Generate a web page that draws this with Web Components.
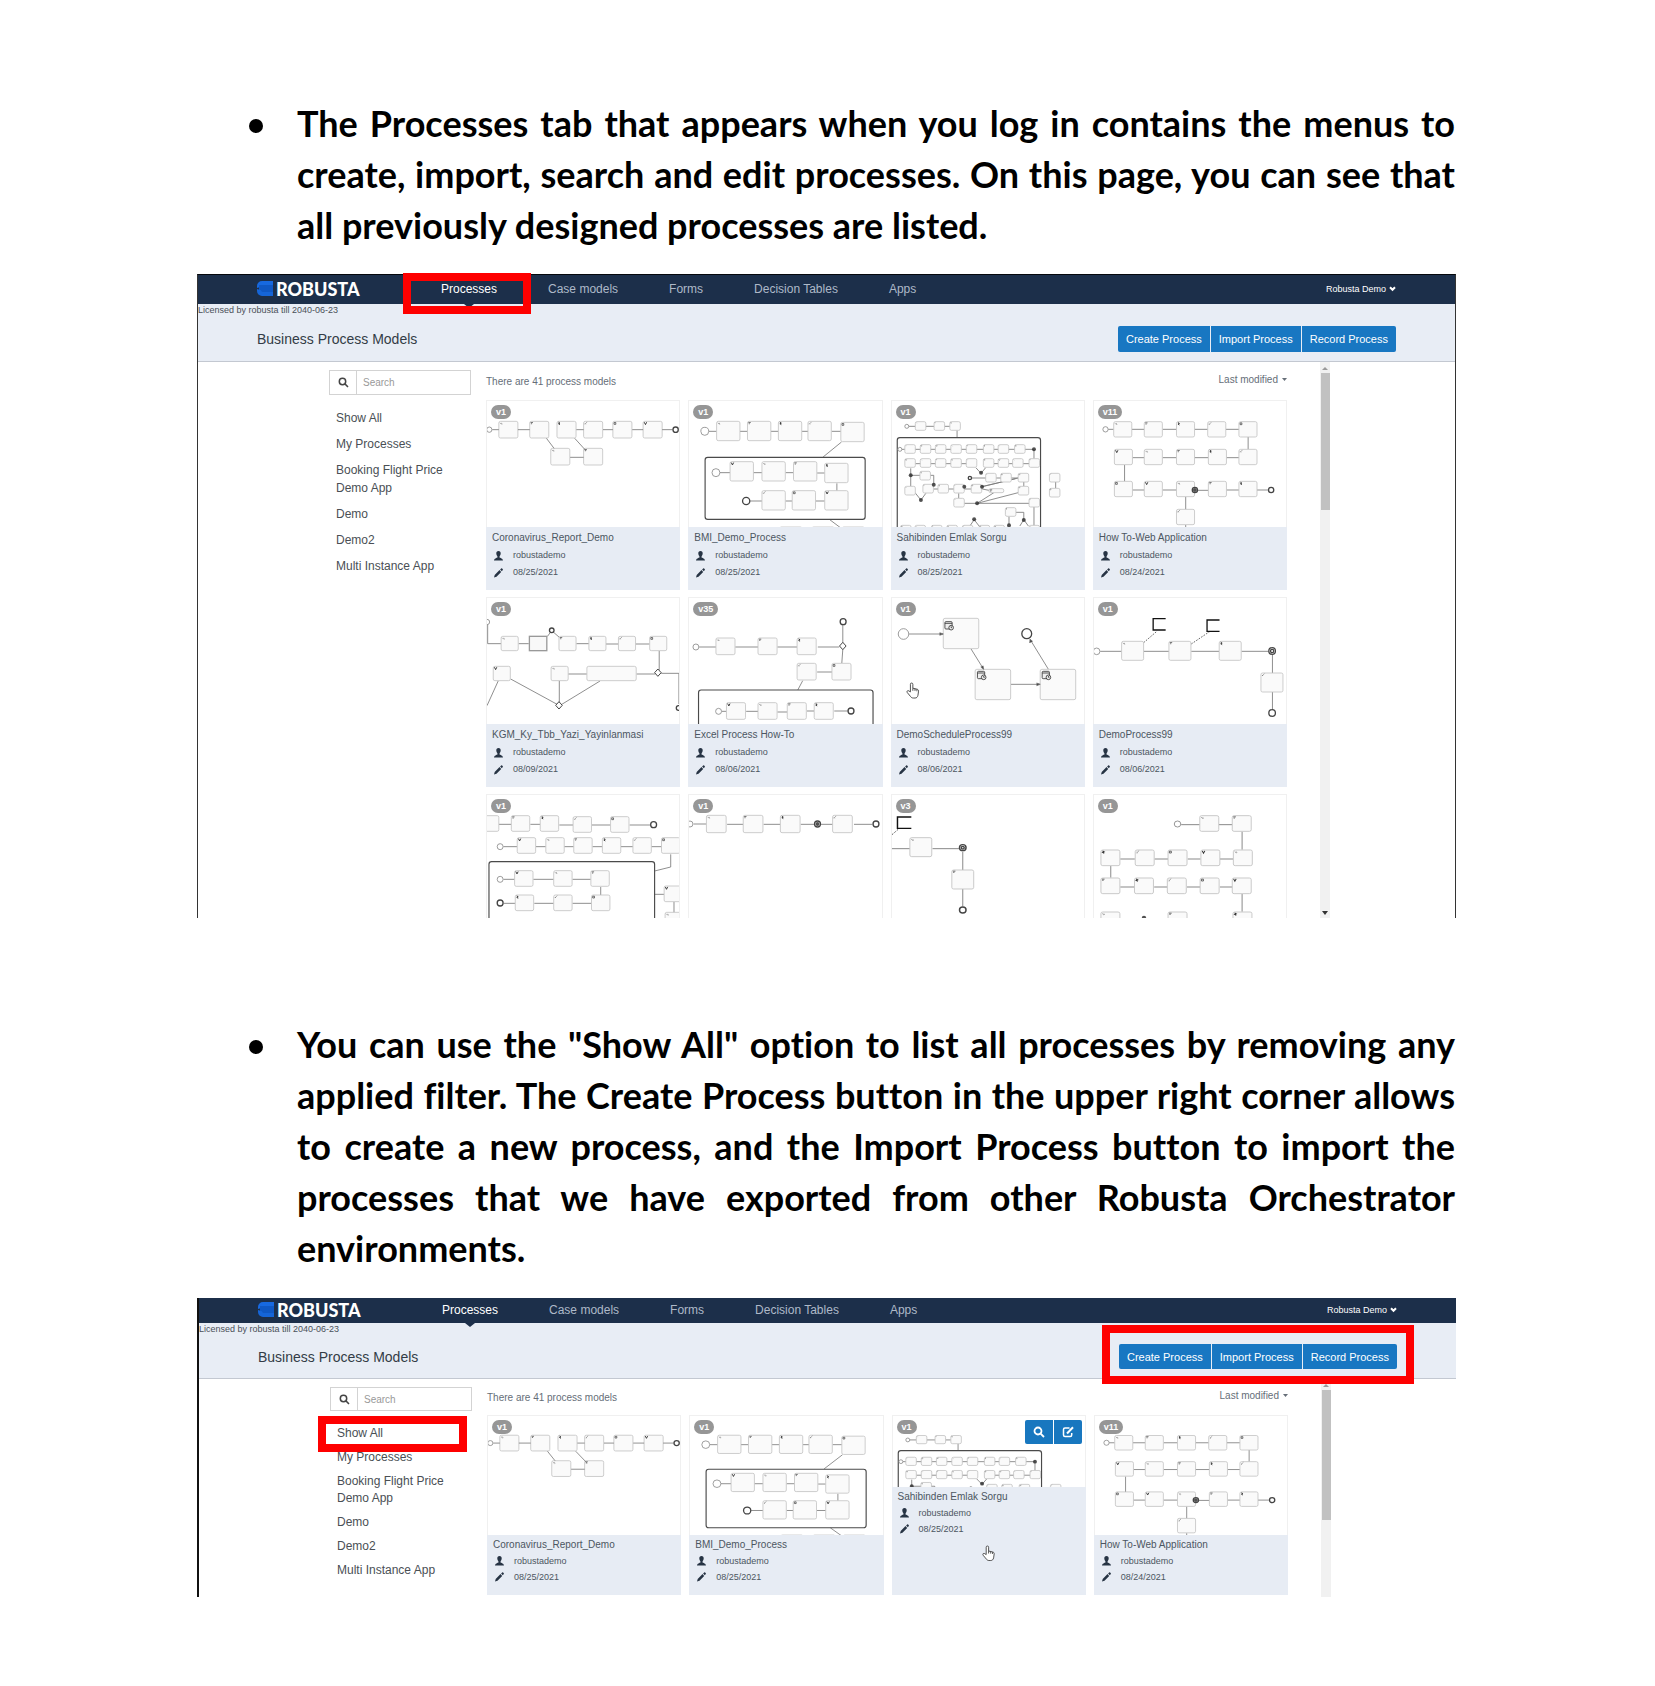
<!DOCTYPE html>
<html lang="en">
<head>
<meta charset="utf-8">
<title>Robusta Orchestrator – Processes</title>
<style>
body{margin:0;background:#fff;color:#000;font-family:"Liberation Sans",Arial,sans-serif}
main{padding:98px 199px 89px 197px}
</style>
</head>
<body>
<main>
  <doc-point>The Processes tab that appears when you log in contains the menus to create, import, search and edit processes. On this page, you can see that all previously designed processes are listed.</doc-point>
  <process-app class="first" mark="nav">
    <process-card version="v1" flow="corona" date="08/25/2021">Coronavirus_Report_Demo</process-card>
    <process-card version="v1" flow="bmi" date="08/25/2021">BMI_Demo_Process</process-card>
    <process-card version="v1" flow="emlak" date="08/25/2021">Sahibinden Emlak Sorgu</process-card>
    <process-card version="v11" flow="web" date="08/24/2021">How To-Web Application</process-card>
    <process-card version="v1" flow="kgm" date="08/09/2021">KGM_Ky_Tbb_Yazi_Yayinlanmasi</process-card>
    <process-card version="v35" flow="excel" date="08/06/2021">Excel Process How-To</process-card>
    <process-card version="v1" flow="schedule" date="08/06/2021">DemoScheduleProcess99</process-card>
    <process-card version="v1" flow="demo" date="08/06/2021">DemoProcess99</process-card>
    <process-card version="v1" flow="nine"></process-card>
    <process-card version="v1" flow="ten"></process-card>
    <process-card version="v3" flow="eleven"></process-card>
    <process-card version="v1" flow="twelve"></process-card>
  </process-app>
  <doc-point class="second">You can use the "Show All" option to list all processes by removing any applied filter. The Create Process button in the upper right corner allows to create a new process, and the Import Process button to import the processes that we have exported from other Robusta Orchestrator environments.</doc-point>
  <process-app class="compact" mark="actions">
    <process-card version="v1" flow="corona" date="08/25/2021">Coronavirus_Report_Demo</process-card>
    <process-card version="v1" flow="bmi" date="08/25/2021">BMI_Demo_Process</process-card>
    <process-card version="v1" flow="emlak" date="08/25/2021" active>Sahibinden Emlak Sorgu</process-card>
    <process-card version="v11" flow="web" date="08/24/2021">How To-Web Application</process-card>
  </process-app>
</main>
<script>
const HAND = '<path d="M4.2 9.6V2.2a1.2 1.2 0 0 1 2.4 0V6l4.2 1c1 .3 1.5.9 1.4 1.9l-.6 4c-.3 1.6-1.300 2.600-2.800 2.600H7c-1.200 0-2-.5-2.700-1.500L1.100 10.200c-.9-1.300.7-2.500 1.700-1.500zM6.600 6v2.500M8.700 6.600v2M10.600 7v2" fill="#fff" stroke="#444" stroke-width=".9" stroke-linejoin="round"/>';

/* Flow drawings. ox/oy: origin, sx: horizontal scale.
   B w h points: tasks, L: polylines, C r: start events, E r: end events,
   K: filled gateways, G: open gateways, S: sub-processes (x,y,w,h), N: annotations, X: dashed links. */
const FLOWS = {
corona:{ox:18,oy:15,d:`B 58 50 54,76 148,76 231,76 312,76 401,76 493,76 212,157 312,157
L 34,101 54,101|112,101 148,101|290,101 312,101|371,101 401,101|460,101 493,101|551,101 583,101|199,127 222,157|285,127 320,165|271,184 312,184
C 8 25,101
E 8 592,101`},
bmi:{ox:626,oy:15,d:`L 686,106 710,106|781,106 804,106|875,106 898,106|970,106 988,106|1060,106 1088,106|1090,138 1034,183|720,230 751,230|822,230 848,230|920,230 944,230|1016,231 1039,231|1076,262 1076,284|812,315 848,315|920,315 940,315|1012,315 1039,315|1053,370 1088,396
S 675,184,487,186
B 71 58 710,76 804,76 898,76 988,76 1088,79 751,197 848,197 944,197 1039,202 848,284 940,284 1039,284
B 68 30 902,393 1000,393 1092,393
C 12 674,106 708,230
E 11 800,315`},
emlak:{ox:15,oy:15,d:`L 66,91 86,91|118,91 143,91|175,91 191,91|213,103 213,125|45,160 447,160|447,160 447,188|86,203 258,203|325,203 432,203|270,215 286,232 300,215|72,217 72,271|72,238 142,238 142,265|257,246 399,246|399,246 289,272|142,279 290,279 310,283|85,290 103,312 118,292|218,292 218,307|235,322 432,322|274,322 325,290|274,322 399,290|391,248 289,272|416,258 416,271|447,333 447,394|392,349 416,349 416,371|371,362 371,388|252,390 265,371 280,390|404,390 416,371 430,390|513,258 513,277
S 31,125,436,300
B 32 26 86,77 143,77 191,77 54,146 101,146 147,146 194,146 241,146 293,146 338,146 388,146 54,188 101,188 147,188 194,188 241,188 293,188 338,188 382,188 432,188 100,226 300,232 346,232 399,232 54,271 109,265 155,265 203,265 256,265 399,271 203,307 432,307 360,335 494,232 494,277 41,388 85,388 135,388 182,388 229,388 280,388 325,388 432,388
B 45 12 310,278
C 6 60,91 39,160
E 5 252,246
K 447,160 286,230 72,238 142,266 235,272 289,272 103,312 274,322 265,370 371,388 416,372`},
web:{ox:622,oy:15,d:`L 665,100 682,100|737,100 775,100|831,100 873,100|928,100 968,100|1023,100 1063,100|1091,123 1091,160|739,185 775,185|831,185 873,185|928,185 970,185|1025,185 1063,185|715,207 715,257|739,282 775,282|831,282 873,282|928,283 970,283|1025,282 1063,282|1118,282 1151,282|901,302 901,341|901,387 901,396
B 55 46 682,77 775,77 873,77 968,77 1063,77 684,160 775,160 873,160 970,160 1063,160 684,256 775,256 873,256 970,256 1063,256 873,340
C 8 657,100
E 8 1161,282 929,282
K 929,282`},
kgm:{ox:18,oy:22,d:`L 18,94 24,94|20,102 20,159 61,159|114,159 145,159|202,137 215,120 238,140|290,159 328,159|380,160 418,160|470,160 513,160|542,180 542,238|265,250 322,250|473,250 530,250|548,248 602,248 602,340|90,265 237,344|238,270 238,337|362,271 244,342|52,271 18,345
C 8 18,94
E 7 215,119 601,352
B 52 43 61,137 237,137 328,137 418,137 513,137 37,227 213,227
B 150 43 322,227
T 147,137,53,43
G 237,344 538,246`},
excel:{ox:626,oy:22,d:`L 657,169 708,169|767,169 836,169|895,169 955,169|1018,169 1083,169|1094,100 1094,158|1094,176 1091,217|1016,244 1061,244|972,270 957,298|726,362 740,362|800,362 836,362|895,364 925,364|985,361 1007,361|1068,361 1110,361
S 655,298,531,140
B 58 50 708,142 836,142 955,142 955,218 1061,218 740,336 836,336 925,336 1007,336
C 9 647,169 716,362
E 9 1095,93 1119,361
G 1094,166`},
schedule:{ox:15,oy:22,d:`L 67,130 171,130|255,174 294,236|377,281 466,281|491,236 435,146
B 108 91 171,83 268,236 466,236
C 16 50,130
E 15 425,129
A 160,126 171,130 160,134|285,229 294,236 292,225|455,277 466,281 455,285|434,157 435,146 443,152
Q 176,93 275,242 472,242
H 58,274`},
demo:{ox:622,oy:22,d:`L 641,182 706,182|773,182 850,182|918,182 1003,182|1071,182 1154,182|1165,192 1165,247|1165,304 1165,355
X 773,156 812,123|918,160 975,122
B 67 57 706,152 850,152 1003,152 1130,247
C 10 630,182
E 10 1164,181 1164,367
E 5 1164,181
N 800,84 964,88`},
nine:{ox:18,oy:14,d:`L 54,102 92,102|150,102 180,102|238,104 280,104|337,104 394,104|452,104 515,104|68,169 110,169|167,169 197,169|253,169 282,169|339,169 369,169|425,169 462,169|518,169 549,169|577,192 577,230 528,242|68,267 102,267|159,267 221,267|278,267 334,267|364,290 364,314|69,339 104,339|162,339 221,339|278,339 336,339|528,312 557,312|587,334 587,368
S 24,214,504,220
B 56 47 -2,76 92,76 180,76 280,79 394,79 110,142 197,142 282,142 369,142 462,142 549,142 102,241 221,241 334,241 104,314 221,314 336,314 557,287 560,366
C 9 58,169 58,267
E 9 525,103 58,338`},
ten:{ox:626,oy:14,d:`L 640,101 679,101|742,102 791,102|853,102 904,102|966,102 1008,102|1025,102 1063,102|1128,102 1184,102
B 60 52 679,75 791,75 904,75 1063,75
C 9 629,101
E 9 1017,101 1195,101
K 1017,101`},
eleven:{ox:15,oy:14,sx:1.11,d:`L 15,175 64,175|126,175 199,175|209,184 209,239|209,296 209,348
X 15,133 34,115
B 60 57 64,142 179,239
E 9 209,172 209,359
E 4 209,172
N 28,80`},
twelve:{ox:560,oy:14,sx:1.11,d:`L 799,103 850,103|902,103 939,103|966,124 966,178|632,206 672,206|726,206 763,206|817,206 852,206|905,206 942,206|606,227 606,262|632,290 671,290|725,290 761,290|815,290 851,290|905,290 940,290|966,311 966,364
B 52 47 850,76 939,76 579,179 673,179 763,179 853,179 942,179 579,263 671,263 761,263 851,263 939,263 579,365 763,365 941,365
C 9 789,101
K 697,382`}
};
const MARKS = ['M4 5l5 5m0-5l2 5','M3 4h8M4 8h4','M5 3l5 3-5 2 5 3','M4 10l8-8M4 7l3 3','M4 4h6v6H4z','M4 3l4 8 4-8'];
function drawFlow(name){
  const f = FLOWS[name]; let out = '', n = 0;
  for (const line of f.d.split('\n')) {
    const k = line[0], rest = line.slice(2).trim();
    if (k==='L'||k==='X'||k==='A') { for (const p of rest.split('|')) out += `<polyline class="${k}" points="${p}"/>`; continue; }
    const t = rest.split(' ');
    if (k==='B') { const w=+t[0], h=+t[1];
      for (const p of t.slice(2)) { const [x,y]=p.split(',').map(Number);
        out += `<rect class="B" x="${x}" y="${y}" width="${w}" height="${h}" rx="5"/>`;
        if (name!=='schedule' && w<100) { const s=w<40?.5:.9; out += `<path class="M" style="stroke-width:${s*(n%3+1.5)}" transform="translate(${x} ${y}) scale(${s})" d="${MARKS[n++%6]}"/>`; } } }
    else if (k==='C'||k==='E') for (const p of t.slice(1)) { const [x,y]=p.split(','); out += `<circle class="${k}" cx="${x}" cy="${y}" r="${t[0]}"/>`; }
    else for (const p of t) { const [x,y,w,h]=p.split(',').map(Number);
      if (k==='K') out += `<circle cx="${x}" cy="${y}" r="6" fill="#333" opacity=".85"/>`;
      if (k==='G') out += `<path class="G" d="M${x} ${y-11}l10 11-10 11-10-11z"/>`;
      if (k==='S') out += `<rect class="S" x="${x}" y="${y}" width="${w}" height="${h}" rx="8"/>`;
      if (k==='T') out += `<rect x="${x}" y="${y}" width="${w}" height="${h}" fill="#f8f8f8" stroke="#999" stroke-width="4"/>`;
      if (k==='N') out += `<path d="M${x+40} ${y}h-38v34h38" fill="none" stroke="#111" stroke-width="4"/>`;
      if (k==='Q') out += `<g transform="translate(${x} ${y})" fill="#eee" stroke="#333" stroke-width="2.500"><rect width="22" height="22" rx="3"/><path d="M0 5h22"/><circle cx="19" cy="18" r="7"/><path d="M19 14v4h3"/></g>`;
      if (k==='H') out += `<g transform="translate(${x} ${y}) scale(3.100)">${HAND}</g>`; }
  }
  return `<svg viewBox="0 0 585 381" preserveAspectRatio="none" aria-hidden="true"><g transform="scale(${f.sx||1} 1) translate(${-f.ox} ${-f.oy})">${out}</g></svg>`;
}

class DocPoint extends HTMLElement {
  constructor(){ super(); this.attachShadow({mode:'open'}).innerHTML = `
<style>
:host{display:flex;gap:34px;padding-left:52px;margin-right:1px;font:700 36px/51px Lato,sans-serif;font-variant-ligatures:none;color:#000}
:host(.second){margin-top:101px}
i{flex:none;width:14px;height:14px;border-radius:50%;background:#000;margin-top:21px}
p{margin:0;flex:1;text-align:justify}
</style><i></i><p><slot></slot></p>`; }
}
customElements.define('doc-point', DocPoint);

class CallOut extends HTMLElement {
  constructor(){ super(); this.attachShadow({mode:'open'}).innerHTML = `
<style>:host{display:block;position:absolute;box-sizing:border-box;border:8px solid #fe0000;z-index:5;pointer-events:none}</style>`; }
}
customElements.define('call-out', CallOut);

class ProcessCard extends HTMLElement {
  connectedCallback(){
    const date = this.getAttribute('date'), active = this.hasAttribute('active');
    this.attachShadow({mode:'open'}).innerHTML = `
<style>
:host{display:flex;flex-direction:column;position:relative;height:var(--card-h);overflow:hidden;color:#4c5661;font-size:10px}
.pic{box-sizing:border-box;height:var(--pic-h);overflow:hidden;background:#fff;border:1px solid #f0f0f0;border-bottom:0;flex:none}
:host([active]) .pic{height:72px}
svg{display:block}
.pic svg{width:100%;height:var(--pic-h)}
.L,.X,.A{fill:none;stroke:#777;stroke-width:2.500}
.A{fill:#444}
.X{stroke-dasharray:5 4;stroke:#444}
.B{fill:#fafafa;stroke:#c2c2c2;stroke-width:2.500}
.S{fill:none;stroke:#4a4a4a;stroke-width:3.500}
.C{fill:#fff;stroke:#888;stroke-width:2.500}
.E{fill:#fff;stroke:#444;stroke-width:4}
.G{fill:#fff;stroke:#444;stroke-width:3}
.M{fill:none;stroke:#333}
.badge{position:absolute;left:5px;top:5px;padding:0 5px;border-radius:7px;background:#969696;color:#fff;font:700 9px/14px "Liberation Sans",sans-serif}
.info{flex:1;background:#e7ecf4;padding:var(--info-pad) 6px 0}
h3{margin:0;font:400 10px/var(--title-h) "Liberation Sans",sans-serif}
.row{display:flex;align-items:center;gap:10px;padding-left:2px;font-size:9px;line-height:17px;height:var(--row-h)}
.row svg{width:9px;height:10px;fill:#273444}
.tools{position:absolute;right:4px;top:5px;display:flex;gap:1px}
.tools button{border:0;padding:0;width:28px;height:24px;display:grid;place-items:center;background:#1877bf}
.tools button:first-child{border-radius:2px 0 0 2px}.tools button:last-child{border-radius:0 2px 2px 0}
.hand{position:absolute;left:90px;top:130px;width:13px;height:17px}
</style>
<div class="pic">${drawFlow(this.getAttribute('flow'))}</div>
<span class="badge">${this.getAttribute('version')}</span>
${date ? `<div class="info"><h3><slot></slot></h3>
<div class="row"><svg viewBox="0 0 9 10"><path d="M4.500 0C6 0 6.800 1 6.700 2.600 6.600 4 6 4.900 5.600 5.300v1.100c.4.500 3.400.8 3.400 3.200H0C0 7.200 3 6.900 3.400 6.400V5.300C3 4.900 2.400 4 2.300 2.600 2.200 1 3 0 4.500 0z"/></svg><span>robustademo</span></div>
<div class="row"><svg viewBox="0 0 9 10"><path d="M0 9.500L.7 7 5.500 2.100 7.200 3.900 2.500 8.700zM6.100 1.500L7.200.5c.4-.3 1-.1 1.400.4.400.4.5.9.2 1.200L7.800 3.200z"/></svg><span>${date}</span></div></div>` : ''}
${active ? `<div class="tools"><button aria-label="View"><svg width="12" height="12" viewBox="0 0 12 12" fill="none" stroke="#fff" stroke-width="1.800"><circle cx="5" cy="5" r="3.500"/><path d="M7.600 7.600L11 11"/></svg></button><button aria-label="Edit"><svg width="12" height="12" viewBox="0 0 12 12" fill="none" stroke="#fff" stroke-width="1.500"><path d="M7.500 2H3a1.500 1.500 0 0 0-1.500 1.500V9A1.500 1.500 0 0 0 3 10.500h5.200A1.500 1.500 0 0 0 9.700 9V7"/><path d="M5 7.500L11 1.200" stroke-width="2"/></svg></button></div>
<svg class="hand" viewBox="0 0 13 17">${HAND}</svg>` : ''}`;
  }
}
customElements.define('process-card', ProcessCard);

class ProcessApp extends HTMLElement {
  connectedCallback(){
    const mark = this.getAttribute('mark');
    this.attachShadow({mode:'open'}).innerHTML = `
<style>
:host{display:block;position:relative;background:#fff;font-family:"Liberation Sans",Arial,sans-serif;
 --nav-h:29px;--head-h:58px;--view-h:556px;--bar-h:38px;--card-h:190px;--pic-h:127px;--info-pad:2px;--title-h:18px;--row-h:17px;--side-h:18px;--side-gap:8px;--field-h:25px;--thumb-h:137px;--btn-h:26px}
:host(.first){margin-top:23px;border:1px solid #111;border-bottom:0;border-color:#05080d #333 #333}
:host(.compact){margin-top:24px;border-left:2px solid #111;--nav-h:25px;--head-h:56px;--view-h:218px;--bar-h:36px;--card-h:180px;--pic-h:120px;--info-pad:1px;--title-h:17px;--row-h:16px;--side-h:17px;--side-gap:7px;--field-h:24px;--thumb-h:130px;--btn-h:25px}
a{color:inherit;text-decoration:none}
button{font-family:inherit}
nav{position:relative;z-index:2;display:flex;align-items:center;height:var(--nav-h);padding:0 59px;background:#1c2f4a;color:#aeb9c8;font-size:12px}
.logo{flex:0 0 184px;display:flex;align-items:center;gap:2px;padding-bottom:2px;box-sizing:border-box;color:#fff;font:900 18px/22px Lato,sans-serif}
.links{display:flex;gap:51px;height:100%}
.links a{position:relative;display:flex;align-items:center;box-sizing:border-box;height:100%;padding-bottom:2px}
.links a.on{color:#fff}
.links a.on::after{content:"";position:absolute;top:100%;left:50%;margin-left:-5px;border:5px solid transparent;border-top:4px solid #1c2f4a;border-bottom:0}
.user{margin-left:auto;border:0;background:none;padding:0 0 2px;color:#fff;font-size:9px;display:flex;align-items:center;gap:3px}
header{position:relative;z-index:1;box-sizing:border-box;height:var(--head-h);background:#e8edf5;border-bottom:1px solid #c3c8d1;display:flex;flex-direction:column}
small{font-size:9px;line-height:12px;color:#4a5058}
.bar{flex:1;display:flex;align-items:center;justify-content:space-between;padding:0 59px}
h2{margin:0;font-weight:400;font-size:14px;color:#333c46}
.acts{position:relative;display:flex;gap:1px}
.acts button{height:var(--btn-h);padding:0 8px;border:0;background:#1877c2;color:#fff;font-size:11px}
.acts button:first-of-type{border-radius:2px 0 0 2px}.acts button:last-of-type{border-radius:0 2px 2px 0}
.view{display:flex;height:var(--view-h);overflow:hidden;padding:0 125px 0 131px}
aside{flex:0 0 142px;min-width:0;padding-top:8px}
.search{box-sizing:border-box;display:flex;height:var(--field-h);border:1px solid #d3d3d3}
.search label{flex:0 0 26px;display:grid;place-items:center;border-right:1px solid #d3d3d3}
.search input{flex:1;width:0;min-width:0;border:0;padding:0 6px;font:10px "Liberation Sans",sans-serif;outline:0;background:none}
.search input::placeholder{color:#999;opacity:1}
ul{list-style:none;margin:14px 0 0;padding:0 0 0 7px;display:flex;flex-direction:column;gap:var(--side-gap);font-size:12px;line-height:var(--side-h);color:#4a4f55}
li{position:relative;width:112px}
section{flex:1;min-width:0;padding-left:15px}
.top{display:flex;align-items:center;justify-content:space-between;height:var(--bar-h);font-size:10px;color:#666e78}
.top button{border:0;background:none;padding:0 0 3px;font-size:10px;color:inherit;display:flex;align-items:center;gap:4px}
.grid{display:grid;grid-template-columns:repeat(4,minmax(0,1fr));gap:7px 8px}
.scroll{flex:0 0 10px;margin-left:33px;background:#f1f1f1;display:flex;flex-direction:column;align-items:center}
.scroll svg{flex:none;margin:4px 0 3px}
.thumb{flex:none;width:9px;height:var(--thumb-h);background:#c1c1c1}
.scroll .down{margin-top:auto}
.c-nav{inset:-2px -34px -10px -38px}
.c-act{inset:-19px -17px -15px}
.c-all{inset:-9px -18px -10px -19px}
</style>
<nav><div class="logo"><svg width="17" height="15" viewBox="0 0 17 15"><path d="M5 0h11v4H6.500C5 4 4 4.800 4 5.800L0 7V5a5 5 0 0 1 5-5z" fill="#1769e0"/><path d="M2 4h14v7H2z" fill="#0f58c4"/><path d="M0 8l4 1.200c0 1 1 1.800 2.500 1.800H16v4H5a5 5 0 0 1-5-5z" fill="#1565d8"/></svg><span>ROBUSTA</span></div>
<div class="links"><a class="on" href="#processes">Processes${mark==='nav'?'<call-out class="c-nav"></call-out>':''}</a><a href="#cases">Case models</a><a href="#forms">Forms</a><a href="#tables">Decision Tables</a><a href="#apps">Apps</a></div>
<button class="user"><span>Robusta Demo</span><svg width="7" height="6" viewBox="0 0 7 6"><path d="M1 1.200l2.500 2.600L6 1.200" fill="none" stroke="#fff" stroke-width="2"/></svg></button></nav>
<header><small>Licensed by robusta till 2040-06-23</small>
<div class="bar"><h2>Business Process Models</h2><div class="acts"><button>Create Process</button><button>Import Process</button><button>Record Process</button>${mark==='actions'?'<call-out class="c-act"></call-out>':''}</div></div></header>
<div class="view">
<aside><div class="search"><label for="q" aria-label="Search"><svg width="11" height="11" viewBox="0 0 11 11" fill="none" stroke="#444" stroke-width="1.500"><circle cx="4.500" cy="4.500" r="3.200"/><path d="M6.900 6.900L10 10"/></svg></label><input id="q" type="text" placeholder="Search"></div>
<ul><li><a href="#all">Show All</a>${mark==='actions'?'<call-out class="c-all"></call-out>':''}</li><li><a href="#mine">My Processes</a></li><li><a href="#booking">Booking Flight Price Demo App</a></li><li><a href="#demo">Demo</a></li><li><a href="#demo2">Demo2</a></li><li><a href="#multi">Multi Instance App</a></li></ul></aside>
<section><div class="top"><span>There are 41 process models</span><button><span>Last modified</span><svg width="5" height="3" viewBox="0 0 5 3"><path d="M0 0h5L2.500 3z" fill="#666e78"/></svg></button></div>
<div class="grid"><slot></slot></div></section>
<div class="scroll"><svg width="6" height="4" viewBox="0 0 6 4"><path d="M0 4l3-3 3 3z" fill="#999"/></svg><div class="thumb"></div>${mark==='nav'?'<svg class="down" width="6" height="4" viewBox="0 0 6 4"><path d="M0 0h6L3 4z" fill="#333"/></svg>':''}</div>
</div>`;
  }
}
customElements.define('process-app', ProcessApp);
</script>
</body>
</html>
